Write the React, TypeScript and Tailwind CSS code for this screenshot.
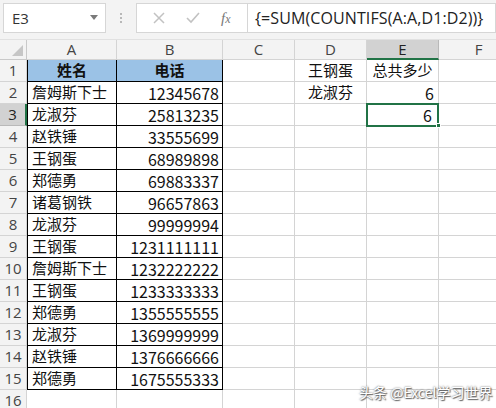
import React from 'react';

const cjk = { fontFamily: '"Noto Sans CJK SC", sans-serif' };

const names = ['詹姆斯下士', '龙淑芬', '赵铁锤', '王钢蛋', '郑德勇', '诸葛钢铁', '龙淑芬', '王钢蛋', '詹姆斯下士', '王钢蛋', '郑德勇', '龙淑芬', '赵铁锤', '郑德勇'];
const phones = ['12345678', '25813235', '33555699', '68989898', '69883337', '96657863', '99999994', '1231111111', '1232222222', '1233333333', '1355555555', '1369999999', '1376666666', '1675555333'];

const cols = ['A', 'B', 'C', 'D', 'E', 'F'];

function Toolbar() {
  return (
    <div className="h-[36px] flex items-start pt-[3px] bg-[#f3f3f3]">
      {/* name box */}
      <div className="ml-[3px] w-[103px] h-[30px] bg-white border border-[#d6d6d6] flex items-center justify-between pl-[8px] pr-[6px]">
        <span className="text-[15px] text-[#333]" style={{ fontFamily: '"Open Sans", sans-serif' }}>E3</span>
        <svg width="10" height="6" viewBox="0 0 10 6"><path d="M1 0 L9 0 L5 5 Z" fill="#7a7a7a" /></svg>
      </div>
      <div className="w-[30px] h-[30px] flex flex-col items-center justify-center gap-[2px]">
        <span className="w-[2px] h-[2px] bg-[#b8b8b8]" />
        <span className="w-[2px] h-[2px] bg-[#b8b8b8]" />
        <span className="w-[2px] h-[2px] bg-[#b8b8b8]" />
      </div>
      {/* buttons */}
      <div className="w-[112px] h-[30px] bg-white border border-[#d6d6d6] flex items-center justify-around px-[6px]">
        <svg width="12" height="12" viewBox="0 0 12 12"><path d="M1 1 L11 11 M11 1 L1 11" stroke="#c2c2c2" strokeWidth="1.5" /></svg>
        <svg width="14" height="12" viewBox="0 0 14 12"><path d="M1 6 L5 10 L13 1" stroke="#c2c2c2" strokeWidth="1.6" fill="none" /></svg>
        <span className="text-[15px] italic text-[#777]" style={{ fontFamily: '"Liberation Serif", serif' }}>f<span className="text-[12px]">x</span></span>
      </div>
      <div className="flex-1 h-[30px] bg-white border border-[#d6d6d6] border-l-0 flex items-center pl-[7px]">
        <span className="text-[16px] text-[#222] tracking-[0.1px]" style={{ fontFamily: '"Open Sans", sans-serif' }}>{'{=SUM(COUNTIFS(A:A,D1:D2))}'}</span>
      </div>
    </div>
  );
}

export default function App() {
  const rows = Array.from({ length: 16 }, (_, i) => i + 1);
  return (
    <div className="w-[496px] h-[408px] overflow-hidden bg-white relative">
      <Toolbar />
      <div className="h-[4px] bg-[#f3f3f3] border-b border-[#e1e1e1]" />
      <div className="grid grid-cols-[27px_90px_106px_72px_72px_72px_80px] auto-rows-[22px] [grid-template-rows:20px]">
        {/* header row */}
        <div className="h-[20px] bg-[#f3f3f3] border-r border-b border-[#c9c9c9] flex items-end justify-end p-[3px]">
          <svg width="11" height="11" viewBox="0 0 11 11"><path d="M11 0 L11 11 L0 11 Z" fill="#c6c6c6" /></svg>
        </div>
        {cols.map((c) => (
          <div
            key={c}
            className={
              c === 'E'
                ? 'h-[20px] bg-[#d2d2d2] border-r border-[#b9b9b9] border-b-2 border-b-[#217346] flex items-center justify-center text-[15px] text-[#222]'
                : 'h-[20px] bg-[#f3f3f3] border-r border-b border-[#d4d4d4] flex items-center justify-center text-[15px] text-[#444]'
            }
            style={{ fontFamily: '"Open Sans", sans-serif' }}
          >
            {c}
          </div>
        ))}
        {rows.map((r) => (
          <React.Fragment key={r}>
            <div
              className={
                r === 3
                  ? 'h-[22px] bg-[#d2d2d2] border-b border-[#b9b9b9] border-r-2 border-r-[#217346] flex items-center justify-center text-[15px] text-[#222]'
                  : 'h-[22px] bg-[#f3f3f3] border-r border-b border-[#d4d4d4] flex items-center justify-center text-[15px] text-[#444]'
              }
              style={{ fontFamily: '"Open Sans", sans-serif' }}
            >
              {r}
            </div>
            {/* A */}
            {r === 1 ? (
              <div className="h-[22px] bg-[#9bc2e6] border-l border-r border-b border-black flex items-center justify-center text-[15px] font-bold text-[#111]" style={cjk}>姓名</div>
            ) : r <= 15 ? (
              <div className="h-[22px] border-l border-r border-b border-black flex items-center pl-[4px] text-[15px] text-[#111]" style={cjk}>{names[r - 2]}</div>
            ) : (
              <div className="h-[22px] border-r border-b border-[#d4d4d4]" />
            )}
            {/* B */}
            {r === 1 ? (
              <div className="h-[22px] bg-[#9bc2e6] border-r border-b border-black flex items-center justify-center text-[15px] font-bold text-[#111]" style={cjk}>电话</div>
            ) : r <= 15 ? (
              <div className="h-[22px] border-r border-b border-black flex items-center justify-end pr-[3px] text-[16px] text-[#111]" style={cjk}>{phones[r - 2]}</div>
            ) : (
              <div className="h-[22px] border-r border-b border-[#d4d4d4]" />
            )}
            {/* C */}
            <div className="h-[22px] border-r border-b border-[#d4d4d4]" />
            {/* D */}
            <div className="h-[22px] border-r border-b border-[#d4d4d4] flex items-center justify-center text-[15px] text-[#111]" style={cjk}>
              {r === 1 ? '王钢蛋' : r === 2 ? '龙淑芬' : ''}
            </div>
            {/* E */}
            {r === 3 ? (
              <div className="h-[22px] relative border-r border-b border-[#d4d4d4]">
                <div className="absolute -left-[1px] -top-[1px] w-[73px] h-[24px] border-2 border-[#217346] flex items-center justify-end pr-[5px] text-[16px] text-[#111]" style={cjk}>6</div>
                <div className="absolute -right-[3px] -bottom-[3px] w-[5px] h-[5px] bg-[#217346] border border-white" />
              </div>
            ) : (
              <div
                className={
                  r === 1
                    ? 'h-[22px] border-r border-b border-[#d4d4d4] flex items-center justify-center text-[15px] text-[#111]'
                    : 'h-[22px] border-r border-b border-[#d4d4d4] flex items-center justify-end pr-[4px] text-[16px] text-[#111]'
                }
                style={cjk}
              >
                {r === 1 ? '总共多少' : r === 2 ? '6' : ''}
              </div>
            )}
            {/* F */}
            <div className="h-[22px] border-r border-b border-[#d4d4d4]" />
          </React.Fragment>
        ))}
      </div>
      {/* watermark */}
      <div
        className="absolute left-[359px] top-[382px] text-[14px] text-white [text-shadow:0_0_2px_#555,1px_1px_1px_#666]"
        style={cjk}
      >
        头条 @Excel学习世界
      </div>
    </div>
  );
}
